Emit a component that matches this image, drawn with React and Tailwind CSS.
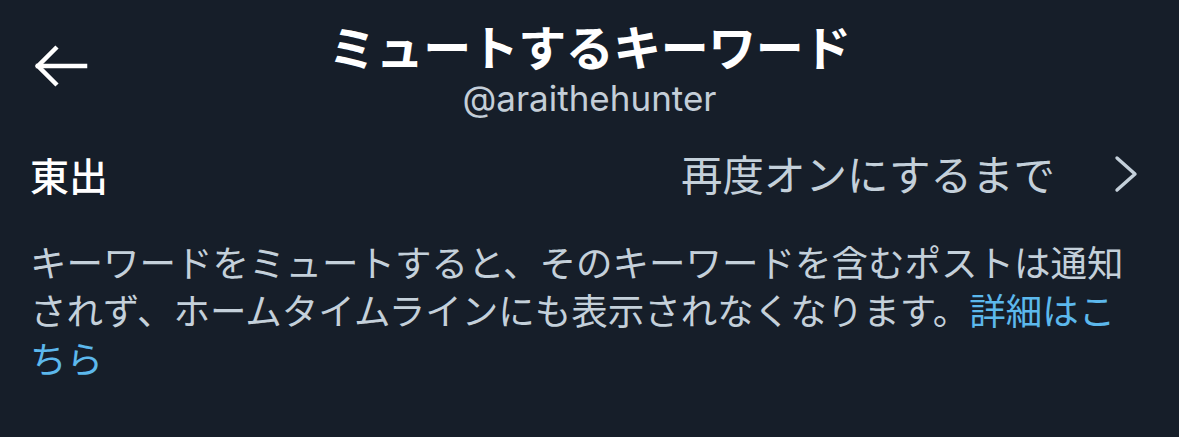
const jp = '"Noto Sans CJK JP", "Noto Sans", sans-serif';

function BackArrow() {
  return (
    <svg width="56" height="46" viewBox="0 0 56 46" fill="none" stroke="#ffffff" strokeWidth="4.5" strokeLinecap="square">
      <path d="M5 23H52" />
      <path d="M24 4L5 23L24 42" strokeLinecap="butt" />
    </svg>
  );
}

function Chevron() {
  return (
    <svg width="26" height="38" viewBox="0 0 26 38" fill="none" stroke="#c4d0da" strokeWidth="3.4" strokeLinecap="round" strokeLinejoin="round">
      <path d="M4 3L22 19L4 35" />
    </svg>
  );
}

export default function App() {
  return (
    <div className="w-[1179px] h-[437px] bg-[#161e29] overflow-hidden" style={{ fontFamily: jp }}>
      <header className="grid grid-cols-[1fr_auto_1fr] items-start pt-[20px]">
        <button className="ml-[33px] mt-[23px] w-[56px] h-[46px]">
          <BackArrow />
        </button>
        <div className="flex flex-col items-center">
          <h1 className="text-[48px] leading-[50px] font-bold text-white tracking-[-0.5px]">ミュートするキーワード</h1>
          <p className="mt-[10px] text-[35px] leading-[36px] text-[#c4ced8]" style={{ fontFamily: 'Inter, "Noto Sans", sans-serif' }}>
            @araithehunter
          </p>
        </div>
        <div />
      </header>

      <div className="flex items-center justify-between pl-[30px] pr-[40px] mt-[36px] h-[44px]">
        <span className="text-[39px] font-medium text-white leading-none">東出</span>
        <div className="flex items-center gap-[58px]">
          <span className="text-[41.5px] text-[#c4d0da] leading-none">再度オンにするまで</span>
          <Chevron />
        </div>
      </div>

      <p className="mt-[42px] pl-[30px] pr-[40px] text-[36.5px] leading-[48px] text-[#c4d0da]">
        キーワードをミュートすると、そのキーワードを含むポストは通知されず、ホームタイムラインにも表示されなくなります。<span className="text-[#5cb8ec]">詳細はこちら</span>
      </p>
    </div>
  );
}
